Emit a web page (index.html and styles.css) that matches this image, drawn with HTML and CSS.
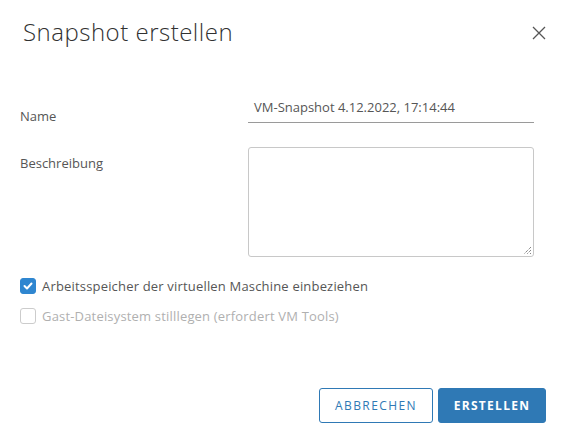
FILE: index.html
```html
<!DOCTYPE html>
<html lang="de">
<head>
<meta charset="utf-8">
<link rel="stylesheet" href="styles.css">
</head>
<body>
<div class="modal">
  <div class="header">
    <h1 class="title">Snapshot erstellen</h1>
    <button class="close" aria-label="Schließen">
      <svg width="14" height="14" viewBox="0 0 14 14"><path d="M1 1L13 13M13 1L1 13" stroke="#565656" stroke-width="1.3" fill="none"/></svg>
    </button>
  </div>
  <div class="form">
    <div class="row row-name">
      <label class="label">Name</label>
      <div class="input">VM-Snapshot 4.12.2022, 17:14:44</div>
    </div>
    <div class="row row-desc">
      <label class="label">Beschreibung</label>
      <div class="textarea">
        <svg class="grip" width="9" height="9" viewBox="0 0 9 9"><path d="M8 1L1 8M8 4L4 8M8 7L7 8" stroke="#555" stroke-width="1" stroke-dasharray="1 1" fill="none"/></svg>
      </div>
    </div>
    <div class="checks">
      <div class="check">
        <span class="box checked"><svg width="10" height="8" viewBox="0 0 10 8"><path d="M1.5 4L4 6.5L8.5 1.5" stroke="#fff" stroke-width="2" fill="none" stroke-linecap="round" stroke-linejoin="round"/></svg></span>
        <span class="check-label">Arbeitsspeicher der virtuellen Maschine einbeziehen</span>
      </div>
      <div class="check disabled">
        <span class="box"></span>
        <span class="check-label">Gast-Dateisystem stilllegen (erfordert VM Tools)</span>
      </div>
    </div>
  </div>
  <div class="footer">
    <button class="btn btn-outline">ABBRECHEN</button>
    <button class="btn btn-primary">ERSTELLEN</button>
  </div>
</div>
</body>
</html>
```
FILE: styles.css
```css
* { box-sizing: border-box; }
html, body { margin: 0; padding: 0; background: #fff; }
body { font-family: "Open Sans", "Noto Sans", sans-serif; color: #565656; width: 566px; height: 444px; overflow: hidden; }
.modal { padding: 0 20px 0 20px; display: flex; flex-direction: column; height: 444px; }
.header { display: flex; justify-content: space-between; align-items: flex-start; padding: 16px 0 0 3px; height: 90px; }
.title { margin: 0; font-weight: 300; font-size: 24px; line-height: 32px; color: #313131; letter-spacing: 0.5px; }
.close { border: 0; background: none; padding: 0; margin: 10px 0 0 0; width: 14px; height: 14px; display: block; }
.close svg { display: block; }
.form { display: flex; flex-direction: column; }
.row { display: flex; }
.label { width: 228px; font-size: 13px; color: #565656; }
.row-name { height: 57px; align-items: flex-start; }
.row-name .label { padding-top: 17px; }
.input { margin-top: 9px; width: 286px; height: 24px; border-bottom: 1px solid #9a9a9a; font-size: 13px; color: #565656; padding: 0 6px; line-height: 16px; }
.row-desc .label { padding-top: 7px; }
.textarea { width: 286px; height: 110px; border: 1px solid #c8c8c8; border-radius: 3px; position: relative; }
.grip { position: absolute; right: 1px; bottom: 1px; }
.checks { margin-top: 21px; display: flex; flex-direction: column; gap: 14px; }
.check { display: flex; align-items: center; gap: 6px; font-size: 13px; height: 16px; letter-spacing: 0.18px; }
.box { width: 16px; height: 16px; border: 1px solid #b3b3b3; border-radius: 3px; display: flex; align-items: center; justify-content: center; }
.box.checked { background: #2f86d0; border-color: #2f86d0; }
.check-label { color: #565656; }
.disabled .check-label { color: #b0b0b0; }
.disabled .box { border-color: #cccccc; }
.footer { margin-top: auto; margin-bottom: 21px; display: flex; justify-content: flex-end; gap: 5px; }
.btn { height: 35px; border-radius: 3px; font-family: "Open Sans", "Noto Sans", sans-serif; font-size: 12px; letter-spacing: 1.4px; padding: 0; }
.btn-outline { width: 114px; background: #fff; border: 1px solid #2f79b5; color: #2f79b5; }
.btn-primary { width: 108px; background: #2f79b5; border: 1px solid #2f79b5; color: #fff; font-weight: 700; letter-spacing: 1.3px; }
```
